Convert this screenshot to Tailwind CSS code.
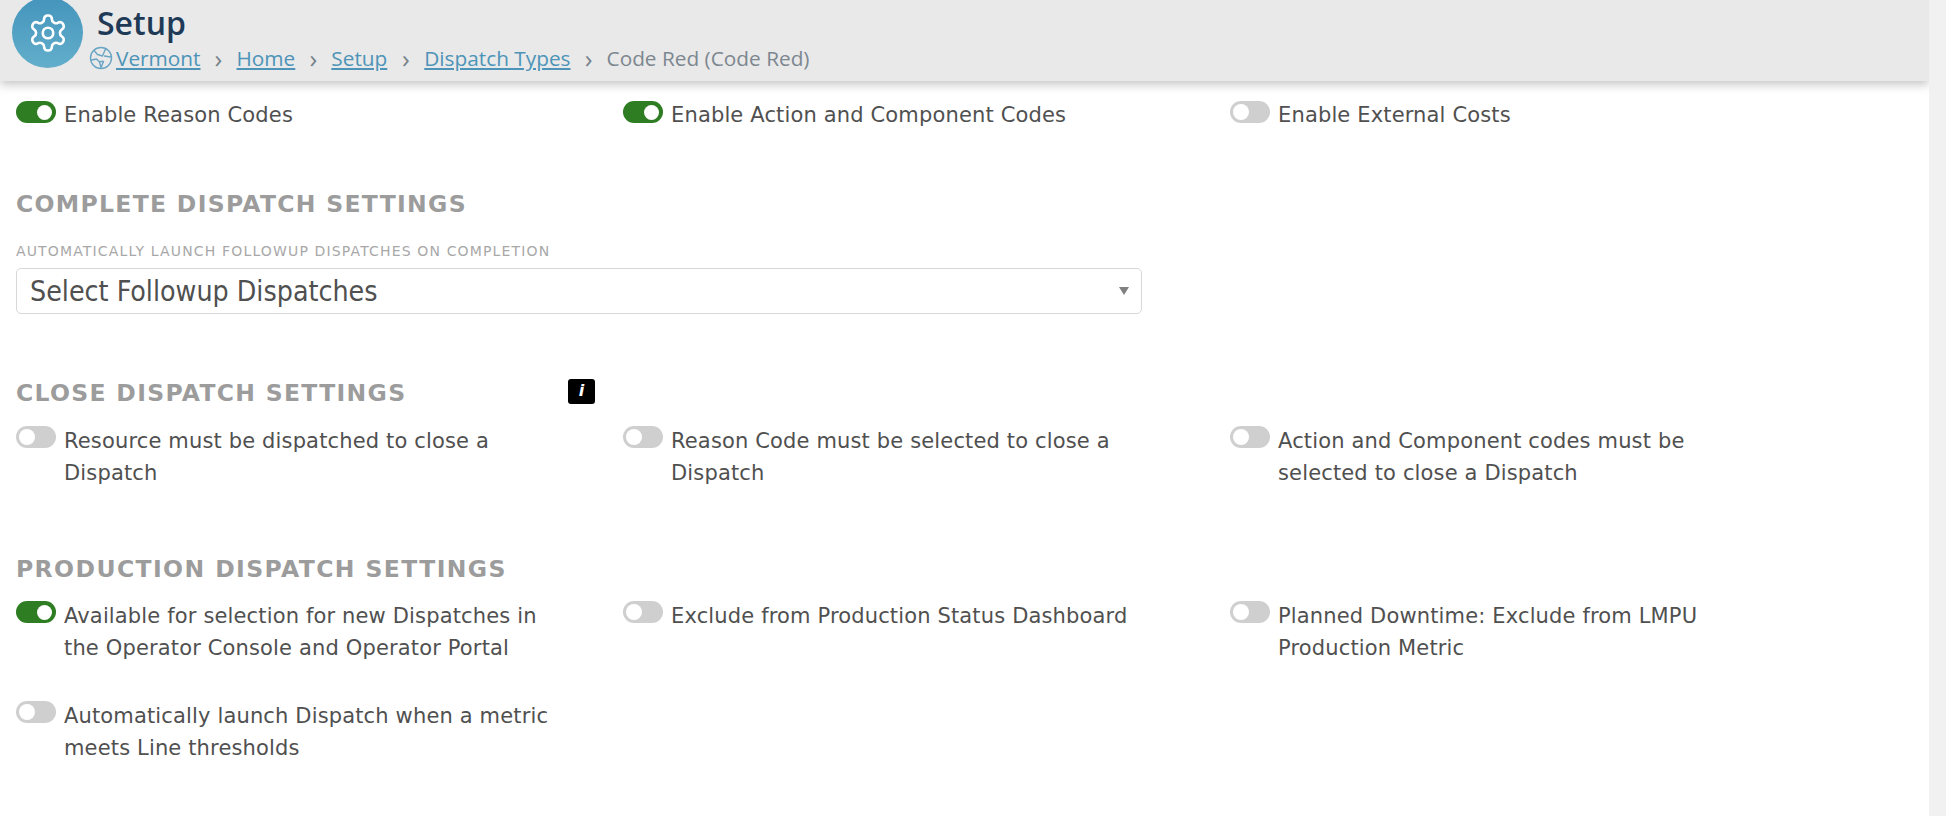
<!DOCTYPE html>
<html lang="en">
<head>
    <meta charset="UTF-8">
    <meta name="viewport" content="width=device-width, initial-scale=1.0">
    <title>Setup</title>
    <script src="https://cdn.jsdelivr.net/npm/@tailwindcss/browser@4"></script>
</head>
<body class="bg-white h-[816px] overflow-hidden flex font-['DejaVu_Sans',sans-serif] text-[#505050]">
    <div class="flex-1 min-w-0">
        <!-- page header -->
        <header class="h-[81px] bg-[#e9e9e9] shadow-[0_3px_10px_rgba(0,0,0,0.25)] flex pl-[12px] overflow-hidden font-['Open_Sans',sans-serif]">
            <div class="w-[71px] h-[71px] -mt-[3px] rounded-full shrink-0 bg-gradient-to-b from-[#4494bc] to-[#62aecb] flex items-center justify-center">
                <svg class="w-[42px] h-[42px]" viewBox="0 0 24 24" fill="none" stroke="#ffffff" stroke-width="1.5" stroke-linecap="round" stroke-linejoin="round">
                    <path d="M12.22 2h-.44a2 2 0 0 0-2 2v.18a2 2 0 0 1-1 1.73l-.43.25a2 2 0 0 1-2 0l-.15-.08a2 2 0 0 0-2.73.73l-.22.38a2 2 0 0 0 .73 2.73l.15.1a2 2 0 0 1 1 1.72v.51a2 2 0 0 1-1 1.74l-.15.09a2 2 0 0 0-.73 2.73l.22.38a2 2 0 0 0 2.73.73l.15-.08a2 2 0 0 1 2 0l.43.25a2 2 0 0 1 1 1.73V20a2 2 0 0 0 2 2h.44a2 2 0 0 0 2-2v-.18a2 2 0 0 1 1-1.73l.43-.25a2 2 0 0 1 2 0l.15.08a2 2 0 0 0 2.73-.73l.22-.39a2 2 0 0 0-.73-2.73l-.15-.08a2 2 0 0 1-1-1.74v-.5a2 2 0 0 1 1-1.74l.15-.09a2 2 0 0 0 .73-2.73l-.22-.38a2 2 0 0 0-2.73-.73l-.15.08a2 2 0 0 1-2 0l-.43-.25a2 2 0 0 1-1-1.73V4a2 2 0 0 0-2-2z"/>
                    <circle cx="12" cy="12" r="3"/>
                </svg>
            </div>
            <div class="ml-[6px] min-w-0">
                <h1 class="ml-[8px] mt-[1px] text-[32px] leading-[43px] font-semibold text-[#1f3a56]">Setup</h1>
                <nav class="flex items-center text-[20.8px] leading-[28px] text-[#7d8790]">
                    <svg class="w-[24px] h-[24px] shrink-0" viewBox="0 0 24 24" fill="none" stroke="#6aa5c4" stroke-width="1.4" stroke-linejoin="round" stroke-linecap="round">
                        <circle cx="12" cy="12" r="10.5"/>
                        <path d="M5 4.5l3.5 4 5 1.5 3-7"/>
                        <path d="M2.5 14l5-1 3 3 1.5 5.5 2.5-6h-3"/>
                        <path d="M15.5 10l6 1"/>
                    </svg>
                    <a href="#" class="ml-[3px] underline text-[#4d94b8]">Vermont</a>
                    <span class="w-[36px] text-center text-[26px] text-[#77828a]">›</span>
                    <a href="#" class="underline text-[#4d94b8]">Home</a>
                    <span class="w-[36px] text-center text-[26px] text-[#77828a]">›</span>
                    <a href="#" class="underline text-[#4d94b8]">Setup</a>
                    <span class="w-[37px] text-center text-[26px] text-[#77828a]">›</span>
                    <a href="#" class="underline text-[#4d94b8]">Dispatch Types</a>
                    <span class="w-[36px] text-center text-[26px] text-[#77828a]">›</span>
                    <span>Code Red (Code Red)</span>
                </nav>
            </div>
        </header>

        <main class="pl-[16px] pt-[18px]">
            <div class="grid grid-cols-[607px_607px_607px] text-[21px] tracking-[0.15px] leading-[32px]">
                <label class="flex"><span class="mt-[2px] w-[40px] h-[22px] rounded-full bg-[#2e7d22] flex justify-end items-center pr-[4px] shrink-0"><span class="w-[15px] h-[15px] rounded-full bg-white"></span></span><span class="ml-[8px] w-[500px]">Enable Reason Codes</span></label>
                <label class="flex"><span class="mt-[2px] w-[40px] h-[22px] rounded-full bg-[#2e7d22] flex justify-end items-center pr-[4px] shrink-0"><span class="w-[15px] h-[15px] rounded-full bg-white"></span></span><span class="ml-[8px] w-[500px]">Enable Action and Component Codes</span></label>
                <label class="flex"><span class="mt-[2px] w-[40px] h-[22px] rounded-full bg-[#cfcfcf] flex items-center pl-[3px] shrink-0"><span class="w-[16px] h-[16px] rounded-full bg-white"></span></span><span class="ml-[8px] w-[500px]">Enable External Costs</span></label>
            </div>

            <h2 class="mt-[59px] text-[23.5px] leading-[28px] font-bold uppercase tracking-[1.3px] text-[#9c9c9c]">Complete Dispatch Settings</h2>
            <div class="mt-[25px] text-[14px] leading-[16px] uppercase tracking-[1.15px] text-[#a8a8a8]">Automatically launch followup dispatches on completion</div>
            <div class="mt-[9px] w-[1126px] h-[46px] border border-[#d8d8d8] rounded-[5px] flex items-center justify-between pl-[13px] pr-[12px] text-[28.3px] font-['DejaVu_Sans_Condensed','DejaVu_Sans',sans-serif]">
                <span class="pt-[3px]">Select Followup Dispatches</span>
                <span class="w-0 h-0 border-x-[5px] border-x-transparent border-t-[8px] border-t-[#808080]"></span>
            </div>

            <div class="mt-[65px] flex items-center">
                <h2 class="w-[552px] text-[23.5px] leading-[28px] font-bold uppercase tracking-[1.3px] text-[#9c9c9c]">Close Dispatch Settings</h2>
                <span class="-mt-[4px] w-[27px] h-[25px] rounded-[3px] bg-black text-white text-[16px] font-bold italic flex items-center justify-center">i</span>
            </div>
            <div class="mt-[18px] grid grid-cols-[607px_607px_607px] text-[21px] tracking-[0.15px] leading-[32px]">
                <label class="flex"><span class="mt-[1px] w-[40px] h-[22px] rounded-full bg-[#cfcfcf] flex items-center pl-[3px] shrink-0"><span class="w-[16px] h-[16px] rounded-full bg-white"></span></span><span class="ml-[8px] w-[500px]">Resource must be dispatched to close a Dispatch</span></label>
                <label class="flex"><span class="mt-[1px] w-[40px] h-[22px] rounded-full bg-[#cfcfcf] flex items-center pl-[3px] shrink-0"><span class="w-[16px] h-[16px] rounded-full bg-white"></span></span><span class="ml-[8px] w-[500px]">Reason Code must be selected to close a Dispatch</span></label>
                <label class="flex"><span class="mt-[1px] w-[40px] h-[22px] rounded-full bg-[#cfcfcf] flex items-center pl-[3px] shrink-0"><span class="w-[16px] h-[16px] rounded-full bg-white"></span></span><span class="ml-[8px] w-[500px]">Action and Component codes must be selected to close a Dispatch</span></label>
            </div>

            <h2 class="mt-[66px] text-[23.5px] leading-[28px] font-bold uppercase tracking-[1.4px] text-[#9c9c9c]">Production Dispatch Settings</h2>
            <div class="mt-[17px] grid grid-cols-[607px_607px_607px] gap-y-[36px] text-[21px] tracking-[0.15px] leading-[32px]">
                <label class="flex"><span class="mt-[1px] w-[40px] h-[22px] rounded-full bg-[#2e7d22] flex justify-end items-center pr-[4px] shrink-0"><span class="w-[15px] h-[15px] rounded-full bg-white"></span></span><span class="ml-[8px] w-[500px]">Available for selection for new Dispatches in the Operator Console and Operator Portal</span></label>
                <label class="flex"><span class="mt-[1px] w-[40px] h-[22px] rounded-full bg-[#cfcfcf] flex items-center pl-[3px] shrink-0"><span class="w-[16px] h-[16px] rounded-full bg-white"></span></span><span class="ml-[8px] w-[500px]">Exclude from Production Status Dashboard</span></label>
                <label class="flex"><span class="mt-[1px] w-[40px] h-[22px] rounded-full bg-[#cfcfcf] flex items-center pl-[3px] shrink-0"><span class="w-[16px] h-[16px] rounded-full bg-white"></span></span><span class="ml-[8px] w-[500px]">Planned Downtime: Exclude from LMPU Production Metric</span></label>
                <label class="flex"><span class="mt-[1px] w-[40px] h-[22px] rounded-full bg-[#cfcfcf] flex items-center pl-[3px] shrink-0"><span class="w-[16px] h-[16px] rounded-full bg-white"></span></span><span class="ml-[8px] w-[500px]">Automatically launch Dispatch when a metric meets Line thresholds</span></label>
            </div>
        </main>
    </div>
    <!-- scrollbar track -->
    <div class="w-[17px] shrink-0 bg-[#f1f1f1]"></div>
</body>
</html>
